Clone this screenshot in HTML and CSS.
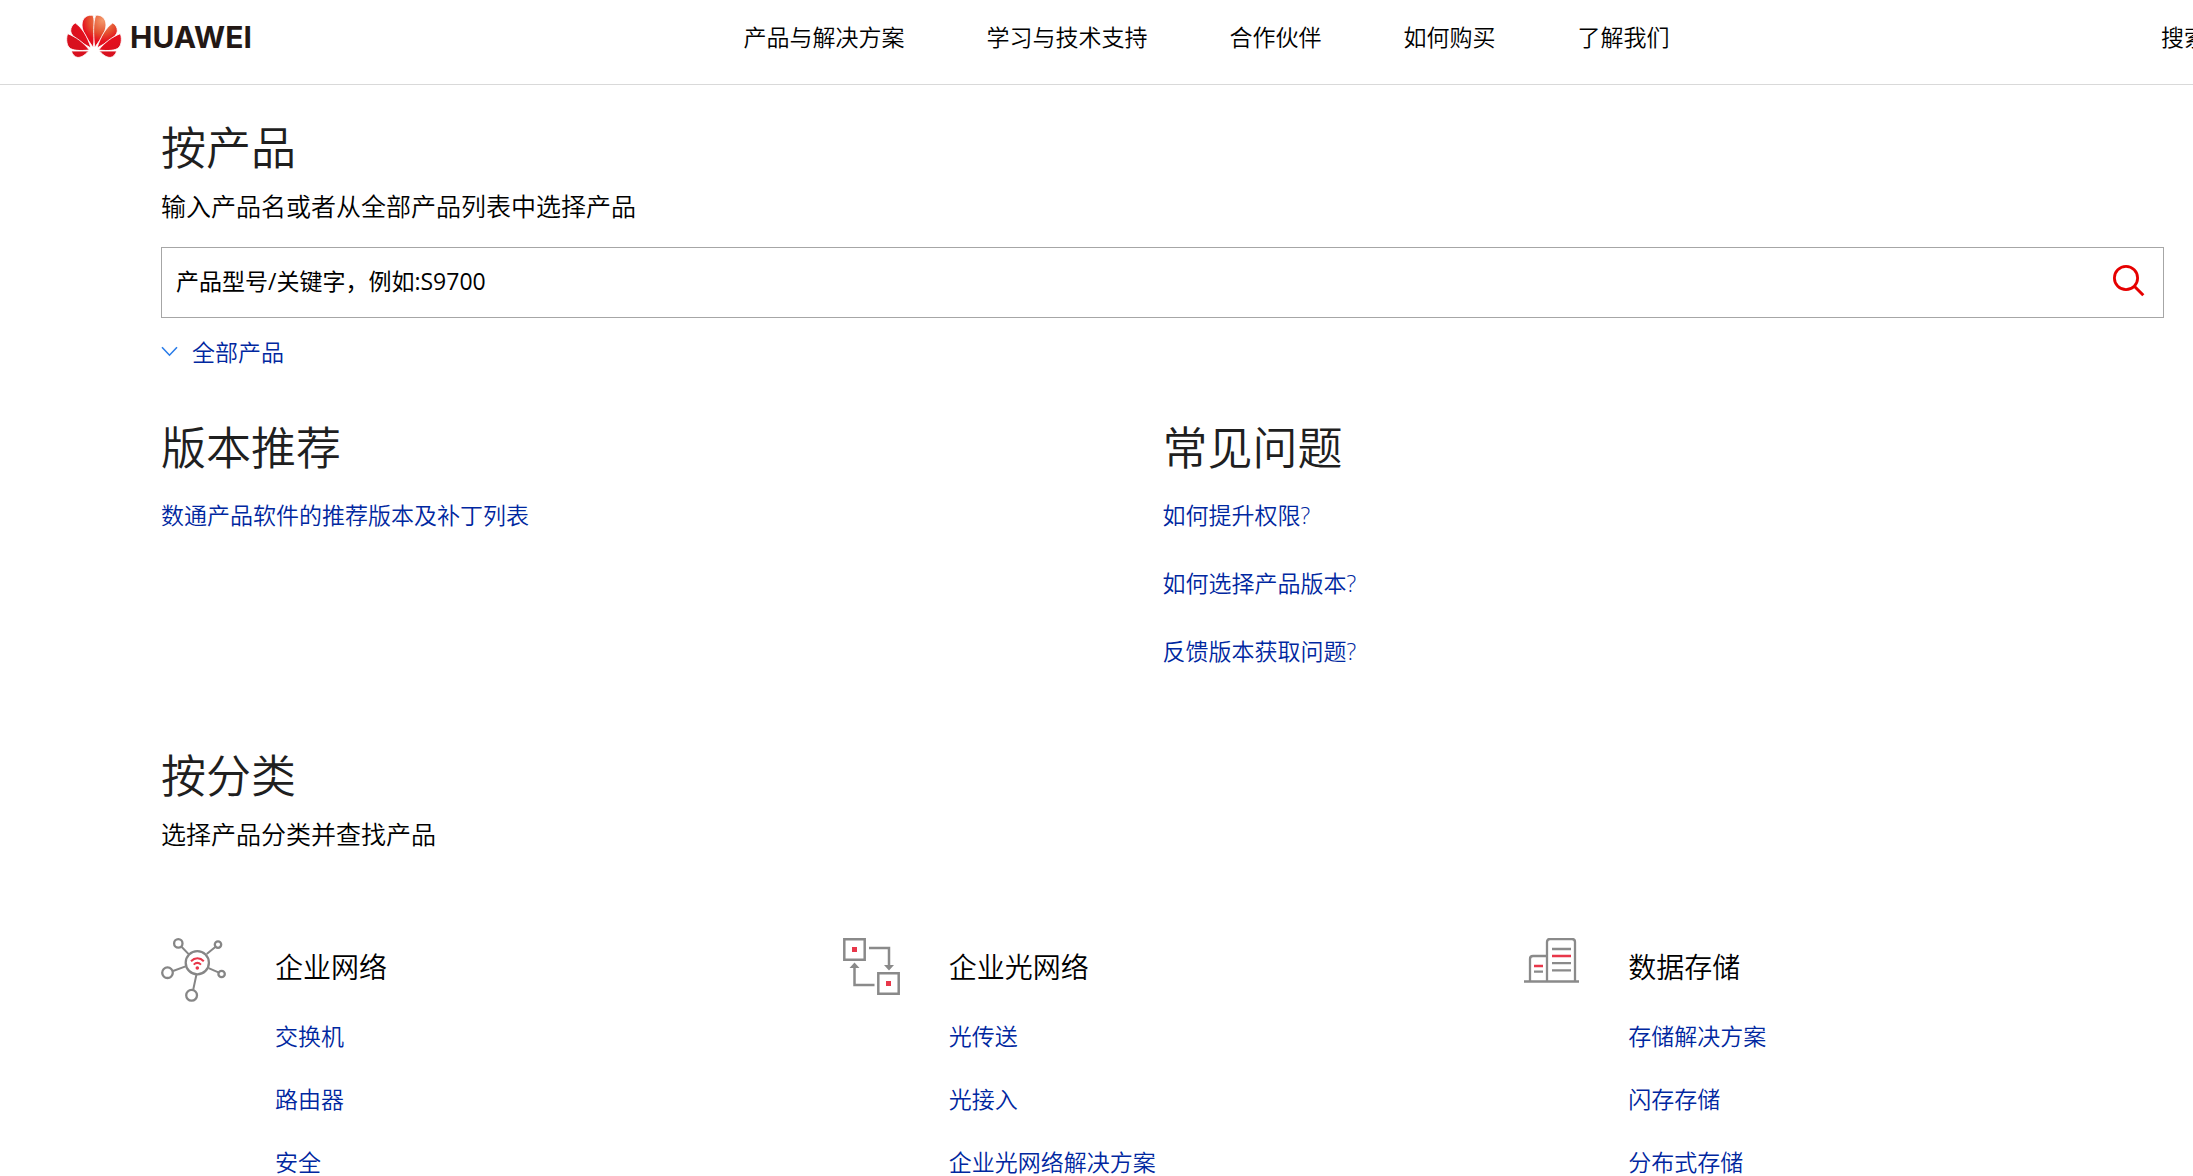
FILE: index.html
```html
<!DOCTYPE html>
<html lang="zh-CN">
<head>
<meta charset="utf-8">
<meta name="viewport" content="width=device-width, initial-scale=1">
<title>软件下载 - 华为</title>
<link rel="stylesheet" href="styles.css">
</head>
<body>
<header class="site-header">
  <a class="logo" href="#">
    <svg class="logo-mark" viewBox="18 26 168 132" aria-hidden="true">
      <defs>
        <radialGradient id="petal" gradientUnits="userSpaceOnUse" cx="128" cy="42" r="105">
          <stop offset="0" stop-color="#f49a6c"/>
          <stop offset="0.38" stop-color="#e4502f"/>
          <stop offset="0.6" stop-color="#e60f1e"/>
          <stop offset="1" stop-color="#d8101e"/>
        </radialGradient>
      </defs>
      <g fill="url(#petal)" stroke="#fff" stroke-width="2.500">
        <path d="M98 121C78 92 62 72 67 47C71 32 83 25 99 27C106 50 105 85 100 121z"/>
        <path d="M93 125C60 106 34 92 32 74C32 62 38 54 46 50C66 64 82 90 93 125z"/>
        <path d="M88 131C60 134 36 133 27 123C18 112 19 92 23 82C48 92 70 108 88 131z"/>
        <path d="M86 134C72 149 62 154 52 153C44 152 37 144 34 134z"/>
        <path d="M106 121C126 92 142 72 137 47C133 32 121 25 107 27C99 50 100 85 104 121z"/>
        <path d="M111 125C144 106 170 92 172 74C172 62 166 54 158 50C138 64 122 90 111 125z"/>
        <path d="M116 131C144 134 168 133 177 123C186 112 185 92 181 82C156 92 134 108 116 131z"/>
        <path d="M118 134C132 149 142 154 152 153C160 152 167 144 170 134z"/>
      </g>
    </svg>
    <span class="logo-text">HUAWEI</span>
  </a>
  <nav class="main-nav">
    <a href="#">产品与解决方案</a>
    <a href="#">学习与技术支持</a>
    <a href="#">合作伙伴</a>
    <a href="#">如何购买</a>
    <a href="#">了解我们</a>
  </nav>
  <a class="header-search" href="#">搜索</a>
</header>

<main class="page">
  <section>
    <h1 class="title">按产品</h1>
    <p class="subtitle" id="product-hint">输入产品名或者从全部产品列表中选择产品</p>
    <form class="search-box">
      <input class="search-input" type="text" aria-labelledby="product-hint" placeholder="产品型号/关键字，例如:S9700">
      <button class="search-button" type="button" aria-label="搜索产品">
        <svg width="32" height="32" viewBox="0 0 32 32" fill="none" stroke="#e60000" aria-hidden="true">
          <circle cx="13" cy="13" r="11.6" stroke-width="2.8"/>
          <path d="M21.3 21.3l9 9" stroke-width="3"/>
        </svg>
      </button>
    </form>
    <button class="all-products" type="button">
      <svg width="17" height="12" viewBox="0 0 17 12" fill="none" stroke="#2b7de9" stroke-width="1.6" aria-hidden="true"><path d="M1 1.2l7.5 8 7.5-8"/></svg>
      <span>全部产品</span>
    </button>
  </section>

  <div class="two-columns">
    <section>
      <h2 class="title">版本推荐</h2>
      <ul class="link-list">
        <li><a href="#">数通产品软件的推荐版本及补丁列表</a></li>
      </ul>
    </section>
    <section>
      <h2 class="title">常见问题</h2>
      <ul class="link-list">
        <li><a href="#">如何提升权限?</a></li>
        <li><a href="#">如何选择产品版本?</a></li>
        <li><a href="#">反馈版本获取问题?</a></li>
      </ul>
    </section>
  </div>

  <section class="by-category">
    <h2 class="title">按分类</h2>
    <p class="subtitle">选择产品分类并查找产品</p>
    <div class="categories">
      <section class="category">
        <svg width="65" height="64" viewBox="0 0 65 64" fill="none" stroke="#868686" stroke-width="2.3" aria-hidden="true">
          <circle cx="36.3" cy="24.7" r="11.6"/>
          <circle cx="17.3" cy="5.4" r="4.2"/>
          <circle cx="57" cy="6.6" r="3.2"/>
          <circle cx="6.5" cy="34.7" r="5.3"/>
          <circle cx="60.6" cy="36" r="3.2"/>
          <circle cx="30.6" cy="57.3" r="5.4"/>
          <path d="M20.500 8.800l7.400 7.600M54.300 9l-8.600 7M12 33l12.600-4.600M57.400 34.400l-9.800-4.200M32.200 51.800l3.200-15" stroke-width="2"/>
          <path d="M30 23.300c3.800-4 9-4 12.800 0M32.700 26.600c2.300-2.200 5-2.200 7.300 0" stroke="#e8374a" stroke-width="2"/>
          <circle cx="36.300" cy="30" r="1.800" fill="#e8374a" stroke="none"/>
        </svg>
        <div>
          <h3 class="category-title">企业网络</h3>
          <ul class="category-links">
            <li><a href="#">交换机</a></li>
            <li><a href="#">路由器</a></li>
            <li><a href="#">安全</a></li>
          </ul>
        </div>
      </section>
      <section class="category">
        <svg width="57" height="57" viewBox="0 0 57 57" fill="none" stroke="#8a8a8a" stroke-width="2.500" aria-hidden="true">
          <path d="M1.300 1.300h20.400v20.400H1.300zM35.300 35.300h20.400v20.400H35.300zM26 10h20V28M31.500 47h-20V29"/>
          <path d="M41 27h10l-5 5.500zM6.500 30h10l-5-5.500z" fill="#8a8a8a" stroke="none"/>
          <path d="M9 9h5v5H9zM43 43h5v5h-5z" fill="#e8374a" stroke="none"/>
        </svg>
        <div>
          <h3 class="category-title">企业光网络</h3>
          <ul class="category-links">
            <li><a href="#">光传送</a></li>
            <li><a href="#">光接入</a></li>
            <li><a href="#">企业光网络解决方案</a></li>
          </ul>
        </div>
      </section>
      <section class="category">
        <svg width="55" height="45" viewBox="0 0 55 45" fill="none" stroke="#8a8a8a" stroke-width="2.300" aria-hidden="true">
          <path d="M0 43.500h55M23 43V4q0-3 3-3h22q3 0 3 3v39M6 43V21q0-3 3-3h14M28 11h19M28 25.200h19M28 32.400h19M10 33.700h9"/>
          <path d="M28 18h19M10 28h9" stroke="#e8374a" stroke-width="2.600"/>
        </svg>
        <div>
          <h3 class="category-title">数据存储</h3>
          <ul class="category-links">
            <li><a href="#">存储解决方案</a></li>
            <li><a href="#">闪存存储</a></li>
            <li><a href="#">分布式存储</a></li>
          </ul>
        </div>
      </section>
    </div>
  </section>
</main>
</body>
</html>
```
FILE: styles.css
```css
*,
*::before,
*::after {
  box-sizing: border-box;
}

body {
  margin: 0;
  background: #fff;
  color: #000;
  font-family: "Open Sans", "Noto Sans CJK SC", sans-serif;
  font-size: 23px;
  font-weight: 350;
  line-height: 26px;
}

h1,
h2,
h3,
p,
ul {
  margin: 0;
  padding: 0;
  font-weight: inherit;
}

ul {
  list-style: none;
}

a {
  color: #0027a0;
  text-decoration: none;
}

svg {
  display: block;
  flex: none;
}

button,
input {
  border: 0;
  padding: 0;
  background: none;
  color: inherit;
  font: inherit;
}

button {
  cursor: pointer;
}

/* Header */
.site-header {
  display: flex;
  align-items: center;
  justify-content: space-between;
  height: 85px;
  padding: 0 0 10px 66px;
  border-bottom: 1px solid #d9d9d9;
}

.site-header a {
  color: #000;
}

.logo {
  display: flex;
  align-items: center;
  gap: 8px;
}

.logo-mark {
  width: 56px;
  height: 44px;
}

.site-header .logo-text {
  color: #231815;
  font: 700 30px/44px Inter, sans-serif;
}

.main-nav {
  display: flex;
  gap: 82px;
}

.header-search {
  width: 32px;
  overflow: hidden;
  white-space: nowrap;
}

/* Page body */
.page {
  padding: 33px 29px 0 161px;
}

.title {
  color: #1f1f1f;
  font-size: 45px;
  line-height: 60px;
}

.subtitle {
  margin-top: 10px;
  font-size: 25px;
  line-height: 36px;
}

.search-box {
  display: flex;
  align-items: center;
  height: 71px;
  margin-top: 23px;
  padding: 0 18px 4px 14px;
  border: 1px solid #a6a6a6;
}

.search-input {
  flex: 1;
  height: 100%;
  outline: 0;
  font-weight: 400;
}

.search-input::placeholder {
  color: #000;
  opacity: 1;
}

.all-products {
  display: flex;
  align-items: center;
  gap: 14px;
  margin-top: 21px;
  color: #0027a0;
}

.two-columns {
  display: grid;
  grid-template-columns: 1fr 1fr;
  margin-top: 53px;
}

.link-list {
  display: grid;
  gap: 42px;
  margin-top: 24px;
}

.by-category {
  margin-top: 82px;
}

.categories {
  display: grid;
  grid-template-columns: repeat(3, 1fr);
  gap: 42px;
  margin-top: 86px;
}

.category {
  display: flex;
  align-items: flex-start;
  gap: 49px;
}

.category-title {
  margin-top: 9px;
  font-size: 28px;
  line-height: 40px;
}

.category-links {
  display: grid;
  gap: 37px;
  margin-top: 36px;
}
```
